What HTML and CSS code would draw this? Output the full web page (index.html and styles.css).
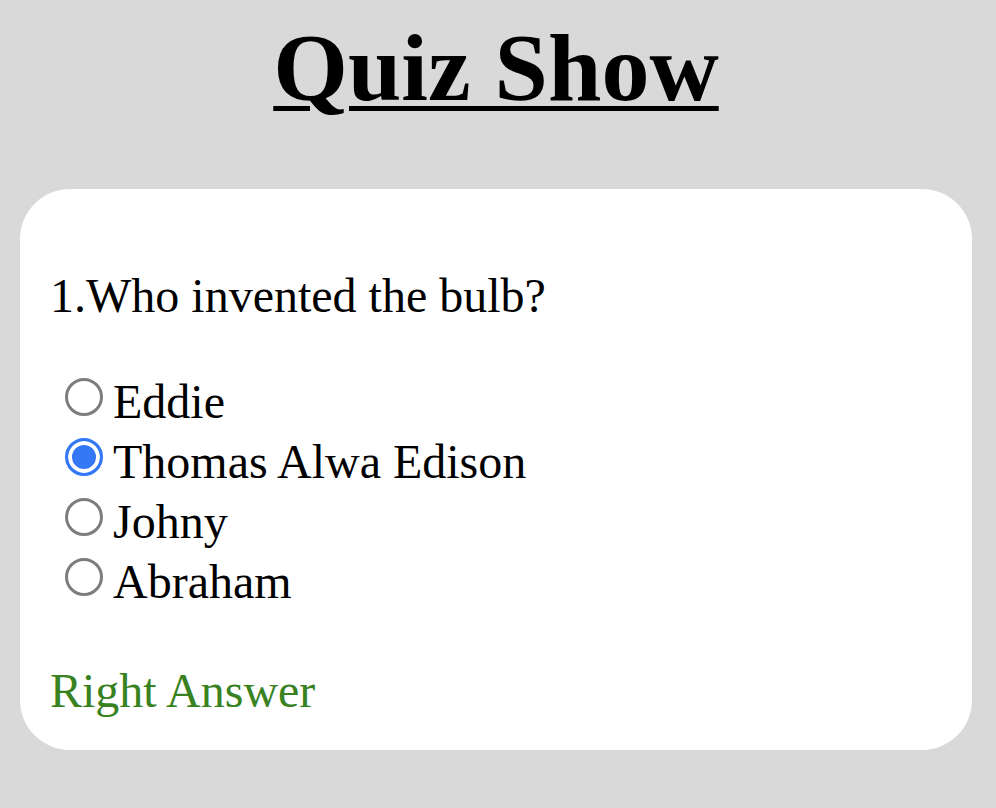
FILE: index.html
```html
<!DOCTYPE html>
<html lang="en">
<head>
<meta charset="utf-8">
<title>Quiz Show</title>
<link rel="stylesheet" href="styles.css">
</head>
<body>
<h1 class="title">Quiz Show</h1>
<div class="card">
  <p class="question">1.Who invented the bulb?</p>
  <div class="options">
    <label class="option"><span class="radio"></span><span class="label">Eddie</span></label>
    <label class="option"><span class="radio checked"></span><span class="label">Thomas Alwa Edison</span></label>
    <label class="option"><span class="radio"></span><span class="label">Johny</span></label>
    <label class="option"><span class="radio"></span><span class="label">Abraham</span></label>
  </div>
  <p class="result">Right Answer</p>
</div>
</body>
</html>
```
FILE: styles.css
```css
html, body {
  margin: 0;
  padding: 0;
}
body {
  background: #d9d9d9;
  font-family: "Liberation Serif", "Times New Roman", serif;
  color: #000;
  padding: 0 24px 0 20px;
}
.title {
  margin: 12px 0 66px;
  font-size: 96px;
  font-weight: bold;
  text-align: center;
  text-decoration: underline;
  text-decoration-thickness: 5px;
  text-underline-offset: 6px;
}
.card {
  background: #fff;
  border-radius: 50px;
  padding: 79px 30px 32px;
}
.question {
  margin: 0 0 49px;
  font-size: 48px;
}
.options {
  display: flex;
  flex-direction: column;
}
.option {
  display: flex;
  align-items: flex-start;
  height: 60px;
  font-size: 48px;
  line-height: 60px;
}
.radio {
  box-sizing: border-box;
  flex: none;
  width: 38px;
  height: 38px;
  margin: 6px 10px 0 15px;
  border: 3px solid #7d7d7d;
  border-radius: 50%;
  background: #fff;
}
.radio.checked {
  border: 3px solid #3478f6;
  background: #3478f6;
  box-shadow: inset 0 0 0 4px #fff;
}
.result {
  margin: 51px 0 0;
  font-size: 48px;
  color: #38821f;
}
```
